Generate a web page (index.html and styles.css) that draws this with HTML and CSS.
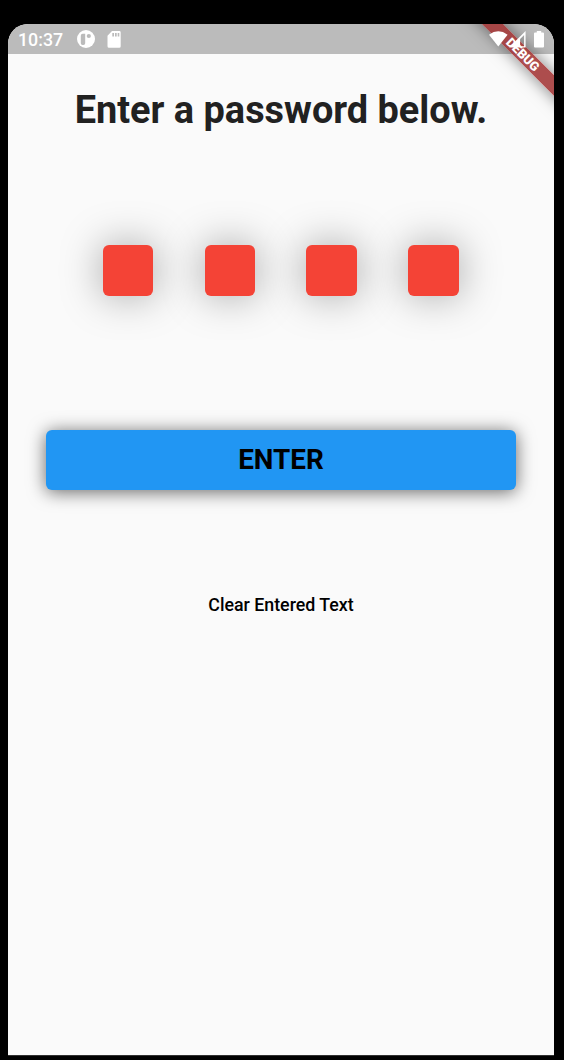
FILE: index.html
```html
<!DOCTYPE html>
<html lang="en">
<head>
<meta charset="utf-8">
<title>Enter a password</title>
<link rel="stylesheet" href="styles.css">
</head>
<body>
<main class="screen">
  <div class="debug-corner"><div class="debug-banner">DEBUG</div></div>
  <header class="status-bar">
    <span class="clock">10:37</span>
    <svg class="icon-app" width="18" height="18" viewBox="0 0 18 18">
      <circle cx="9" cy="9" r="9" fill="#fff"/>
      <path fill="#bbb" d="M5.700 3.800H8.200V13.200q0 1.800-1.800 1.800H5.600q-1.800 0-1.800-1.800V5.700q0-1.900 1.900-1.900z"/>
      <circle cx="11.800" cy="6" r="2.100" fill="#bbb"/>
    </svg>
    <svg class="icon-card" width="14" height="17" viewBox="0 0 14 17">
      <path fill="#fff" fill-rule="evenodd" d="M5 0h7.300q1.400 0 1.400 1.400v13.800q0 1.500-1.500 1.500H2Q.5 16.700.5 15.200V4.800zM5.300 2v3.500H7V2zM8 2v3.500h1.700V2zM10.700 2v3.500h1.600V2z"/>
    </svg>
    <span class="spacer"></span>
    <svg class="icon-wifi" width="19" height="16" viewBox="0 0 19 16">
      <path fill="#fff" d="M0 3.700Q9.300-3.100 18.600 3.700L9.300 15.500z"/>
    </svg>
    <svg class="icon-signal" width="17" height="17" viewBox="0 0 17 17">
      <path fill="#fff" fill-rule="evenodd" d="M16.600 0v16.600H0zM15.100 3.900l-4 4.200v7.200h4z"/>
    </svg>
    <svg class="icon-battery" width="10" height="17" viewBox="0 0 10 17">
      <path fill="#fff" d="M2.800 0h4.400v1.600h1.800q1 0 1 1V15.500q0 1-1 1H1q-1 0-1-1V2.600q0-1 1-1h1.800z"/>
    </svg>
  </header>
  <h1 class="title">Enter a password below.</h1>
  <div class="digits">
    <span class="digit"></span><span class="digit"></span><span class="digit"></span><span class="digit"></span>
  </div>
  <button class="enter">ENTER</button>
  <button class="clear">Clear Entered Text</button>
</main>
</body>
</html>
```
FILE: styles.css
```css
* { box-sizing: border-box; }
body {
  margin: 0;
  height: 1060px;
  padding: 24px 10px 5px 8px;
  background: #000;
  font-family: Roboto, "Liberation Sans", sans-serif;
  overflow: hidden;
}
.screen {
  position: relative;
  height: 1031px;
  display: flex;
  flex-direction: column;
  overflow: hidden;
  background: #fafafa;
  border-radius: 20px 20px 0 0;
  box-shadow: 0 1px #303030;
}
.status-bar {
  height: 30px;
  flex: none;
  display: flex;
  align-items: center;
  padding: 0 10px;
  background: #bbb;
}
.clock {
  width: 59px;
  padding-top: 1px;
  color: #fff;
  font-size: 17.800px;
  font-weight: 500;
  line-height: 20px;
}
.icon-card { margin-left: 12px; }
.spacer { flex: 1; }
.icon-wifi, .icon-signal, .icon-battery { position: relative; z-index: 2; }
.icon-signal { margin-left: 1px; }
.icon-battery { margin-left: 8px; }
.debug-corner {
  position: absolute;
  inset: 0 0 auto auto;
  width: 120px;
  height: 120px;
  overflow: hidden;
  z-index: 1;
}
.debug-banner {
  position: absolute;
  left: 19px;
  top: 22.500px;
  width: 140px;
  height: 15px;
  transform: rotate(45deg);
  background: rgba(164, 58, 58, .9);
  box-shadow: 0 0 16px rgba(0, 0, 0, .5);
  color: #fff;
  font-size: 12.800px;
  font-weight: 900;
  line-height: 15px;
  text-align: center;
}
.title {
  margin: 34px 0 0;
  color: #212121;
  font-size: 37.900px;
  font-weight: 700;
  line-height: 44px;
  text-align: center;
  white-space: nowrap;
}
.digits {
  display: flex;
  gap: 51.200px;
  margin: 113px 0 0 94.700px;
}
.digit {
  width: 50.700px;
  height: 51px;
  border-radius: 6px;
  background: #f44336;
  box-shadow: 0 0 42px rgba(0, 0, 0, .35);
}
.enter {
  height: 60px;
  margin: 134px 38px 0;
  padding: 0;
  border: 0;
  border-radius: 6px;
  background: #2196f3;
  box-shadow: 0 2px 18px rgba(0, 0, 0, .6);
  color: #000;
  font: 700 27.800px/60px Roboto, "Liberation Sans", sans-serif;
}
.clear {
  align-self: center;
  margin: 104px 0 0;
  padding: 0;
  border: 0;
  background: none;
  color: #000;
  font: 500 17.800px/21px Roboto, "Liberation Sans", sans-serif;
  white-space: nowrap;
}
```
